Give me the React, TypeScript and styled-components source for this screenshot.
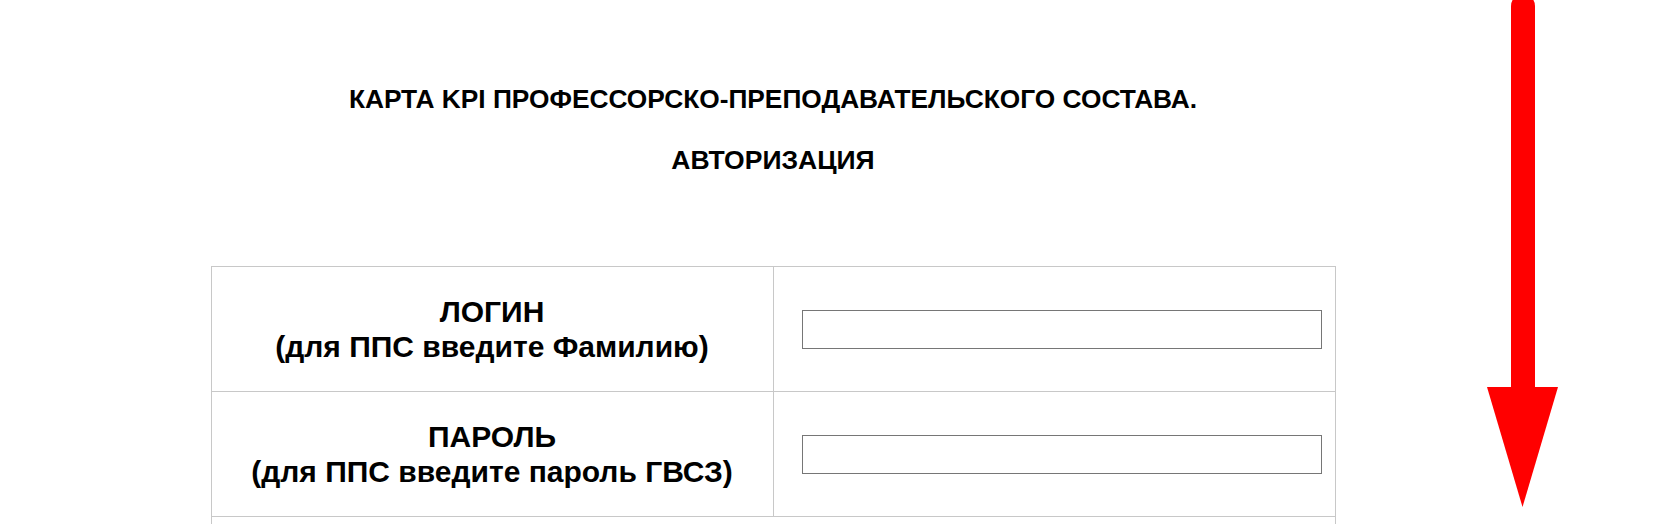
import React from "react";
import styled, { createGlobalStyle } from "styled-components";

const Global = createGlobalStyle`
  html, body {
    margin: 0;
    padding: 0;
    background: #ffffff;
    font-family: "Liberation Sans", Arial, sans-serif;
    color: #000;
  }
`;

const Page = styled.div`
  position: relative;
  width: 1671px;
  height: 524px;
  overflow: hidden;
`;

const Main = styled.main`
  width: 1546px;
  display: flex;
  flex-direction: column;
  align-items: center;
  padding-top: 84px;
`;

const Title = styled.h1`
  margin: 0;
  font-size: 26.3px;
  font-weight: bold;
  line-height: 30px;
  text-align: center;
`;

const SubTitle = styled.h2`
  margin: 31px 0 0;
  font-size: 26.5px;
  font-weight: bold;
  line-height: 30px;
  text-align: center;
`;

const Table = styled.table`
  margin-top: 91px;
  width: 1125px;
  border-collapse: collapse;
  table-layout: fixed;
`;

const Row = styled.tr`
  height: 125px;
`;

const Cell = styled.td<{ $label?: boolean }>`
  border: 1px solid #c8c8c8;
  padding: ${(p) => (p.$label ? "0 4px" : "0 13px 0 28px")};
  text-align: ${(p) => (p.$label ? "center" : "left")};
  vertical-align: middle;
  font-size: 30px;
  font-weight: bold;
  line-height: 35px;
`;

const Input = styled.input`
  display: block;
  box-sizing: border-box;
  width: 520px;
  height: 39px;
  margin: 0;
  border: 1px solid #767676;
  border-radius: 0;
  font-family: "Liberation Sans", Arial, sans-serif;
  font-size: 20px;
  padding: 0 6px;
  outline: none;
  background: #fff;
`;

const Arrow = styled.svg`
  position: absolute;
  left: 1480px;
  top: 0;
  width: 90px;
  height: 524px;
  pointer-events: none;
`;

export default function App() {
  return (
    <Page>
      <Global />
      <Main>
        <Title>КАРТА KPI ПРОФЕССОРСКО-ПРЕПОДАВАТЕЛЬСКОГО СОСТАВА.</Title>
        <SubTitle>АВТОРИЗАЦИЯ</SubTitle>
        <Table>
          <colgroup>
            <col style={{ width: "562px" }} />
            <col />
          </colgroup>
          <tbody>
            <Row>
              <Cell $label>
                ЛОГИН
                <br />
                (для ППС введите Фамилию)
              </Cell>
              <Cell>
                <Input type="text" />
              </Cell>
            </Row>
            <Row>
              <Cell $label>
                ПАРОЛЬ
                <br />
                (для ППС введите пароль ГВСЗ)
              </Cell>
              <Cell>
                <Input type="password" />
              </Cell>
            </Row>
            <Row>
              <Cell colSpan={2} />
            </Row>
          </tbody>
        </Table>
      </Main>
      <Arrow viewBox="1480 0 90 524">
        <path d="M1511 6 A12 12 0 0 1 1535 6 L1535 392 L1511 392 Z" fill="#ff0000" />
        <polygon points="1487,387 1558,387 1522.5,507" fill="#ff0000" />
      </Arrow>
    </Page>
  );
}
